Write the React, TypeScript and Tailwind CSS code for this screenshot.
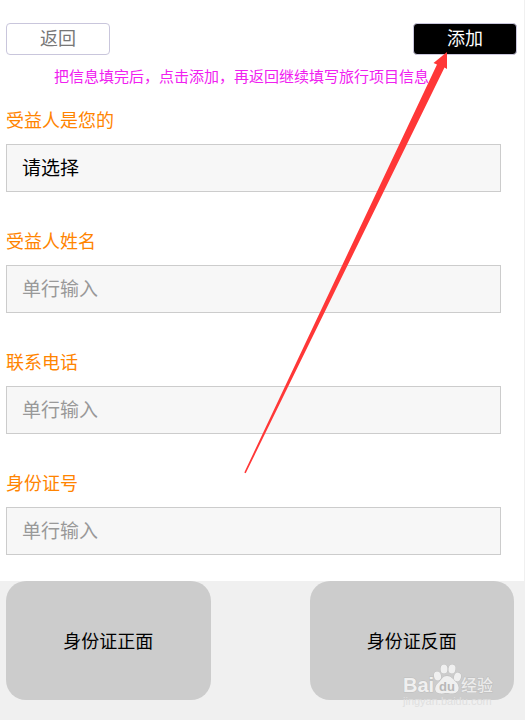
import { useState } from "react";

const fields = [
  { id: "name", label: "受益人姓名", type: "text" },
  { id: "phone", label: "联系电话", type: "tel" },
  { id: "idcard", label: "身份证号", type: "text" },
];

const boxClass =
  "block w-full h-12 border border-[#cccccc] bg-[#f7f7f7] px-[15px] pt-[2px] text-[19px] leading-7 rounded-none outline-none";

const labelClass = "block h-6 mb-[11px] text-lg leading-6 text-[#ff8400]";

const cardClass = "w-full h-[119px] pt-[2px] rounded-[20px] bg-[#cccccc] text-lg leading-6 text-black";

function Arrow() {
  return (
    <svg
      className="absolute top-[52px] right-[77px] w-[204px] h-[422px] pointer-events-none"
      viewBox="0 0 204 422"
      aria-hidden="true"
    >
      <path d="M203 0 L189.5 11 L193 12.5 L0.3 420.5 L1.7 421.3 L200.5 15.5 L203 17 Z" fill="#ff3737" />
    </svg>
  );
}

function Watermark() {
  return (
    <svg
      className="absolute right-[17px] bottom-[-10px] w-[98px] h-[48px] pointer-events-none"
      viewBox="0 0 98 48"
      aria-hidden="true"
    >
      <g fill="#f0f0f0" stroke="#bdbdbd" strokeWidth="1" paintOrder="stroke">
        <text x="4" y="30" fontSize="20" fontWeight="700" fontFamily="'Liberation Sans', sans-serif">
          Bai
        </text>
        <ellipse cx="38.5" cy="14" rx="3.5" ry="4.5" transform="rotate(-12 38.5 14)" />
        <ellipse cx="45" cy="7" rx="3.5" ry="4.5" />
        <ellipse cx="53" cy="7" rx="3.5" ry="4.5" transform="rotate(8 53 7)" />
        <ellipse cx="58.5" cy="15" rx="3.5" ry="4.5" transform="rotate(14 58.5 15)" />
        <path d="M48 14 C52 14 54 17 57 20 C61 24 61 31 54 31.5 C51 31.8 50 31 47.5 31 C45 31 44 32 41 31.5 C35 31 35 25 39 21 C43 17.5 43.5 14 48 14 Z" />
      </g>
      <text x="40" y="29" fontSize="13" fontWeight="700" fill="#b8b8b8" fontFamily="'Liberation Sans', sans-serif">
        du
      </text>
      <text
        x="62"
        y="29"
        fontSize="16"
        fontWeight="500"
        fill="#ececec"
        stroke="#bdbdbd"
        strokeWidth="1"
        paintOrder="stroke"
        fontFamily="'Noto Sans CJK SC', sans-serif"
      >
        经验
      </text>
      <text x="4" y="43" fontSize="11" fill="#dfdfdf" fontFamily="'Liberation Sans', sans-serif">
        jingyan.baidu.com
      </text>
    </svg>
  );
}

export default function App() {
  const [relation, setRelation] = useState("");

  return (
    <div className="relative min-h-screen bg-[#f0f0f0] font-['Liberation_Sans','Noto_Sans_CJK_SC',sans-serif]">
      <form className="bg-white border-r border-[#f0f0f0] pt-[23px] pb-[26px]" onSubmit={(e) => e.preventDefault()}>
        <div className="flex justify-between pl-[6px] pr-[7px]">
          <button
            type="button"
            className="w-[104px] h-8 rounded border border-[#c9c6dc] bg-white text-lg leading-6 text-[#777777]"
          >
            返回
          </button>
          <button
            type="submit"
            className="w-[104px] h-8 rounded border border-[#c9c6dc] bg-black text-lg leading-6 text-white"
          >
            添加
          </button>
        </div>

        <p className="mt-[10px] pl-[54px] text-[15px] leading-6 text-[#f020f0]">
          把信息填完后，点击添加，再返回继续填写旅行项目信息
        </p>

        <div className="flex flex-col gap-[38px] mt-5 pl-[6px] pr-[23px]">
          <div>
            <label htmlFor="relation" className={labelClass}>
              受益人是您的
            </label>
            <select
              id="relation"
              value={relation}
              onChange={(e) => setRelation(e.target.value)}
              className={`${boxClass} appearance-none text-black`}
            >
              <option value="">请选择</option>
            </select>
          </div>
          {fields.map((f) => (
            <div key={f.id}>
              <label htmlFor={f.id} className={labelClass}>
                {f.label}
              </label>
              <input
                id={f.id}
                name={f.id}
                type={f.type}
                placeholder="单行输入"
                className={`${boxClass} placeholder:text-[#999999]`}
              />
            </div>
          ))}
        </div>
      </form>

      <div className="flex gap-[99px] pl-[6px] pr-[11px] pb-5">
        <div className="flex-1">
          <button type="button" className={cardClass}>
            身份证正面
          </button>
        </div>
        <div className="relative flex-1">
          <button type="button" className={cardClass}>
            身份证反面
          </button>
          <Watermark />
        </div>
      </div>

      <Arrow />
    </div>
  );
}
